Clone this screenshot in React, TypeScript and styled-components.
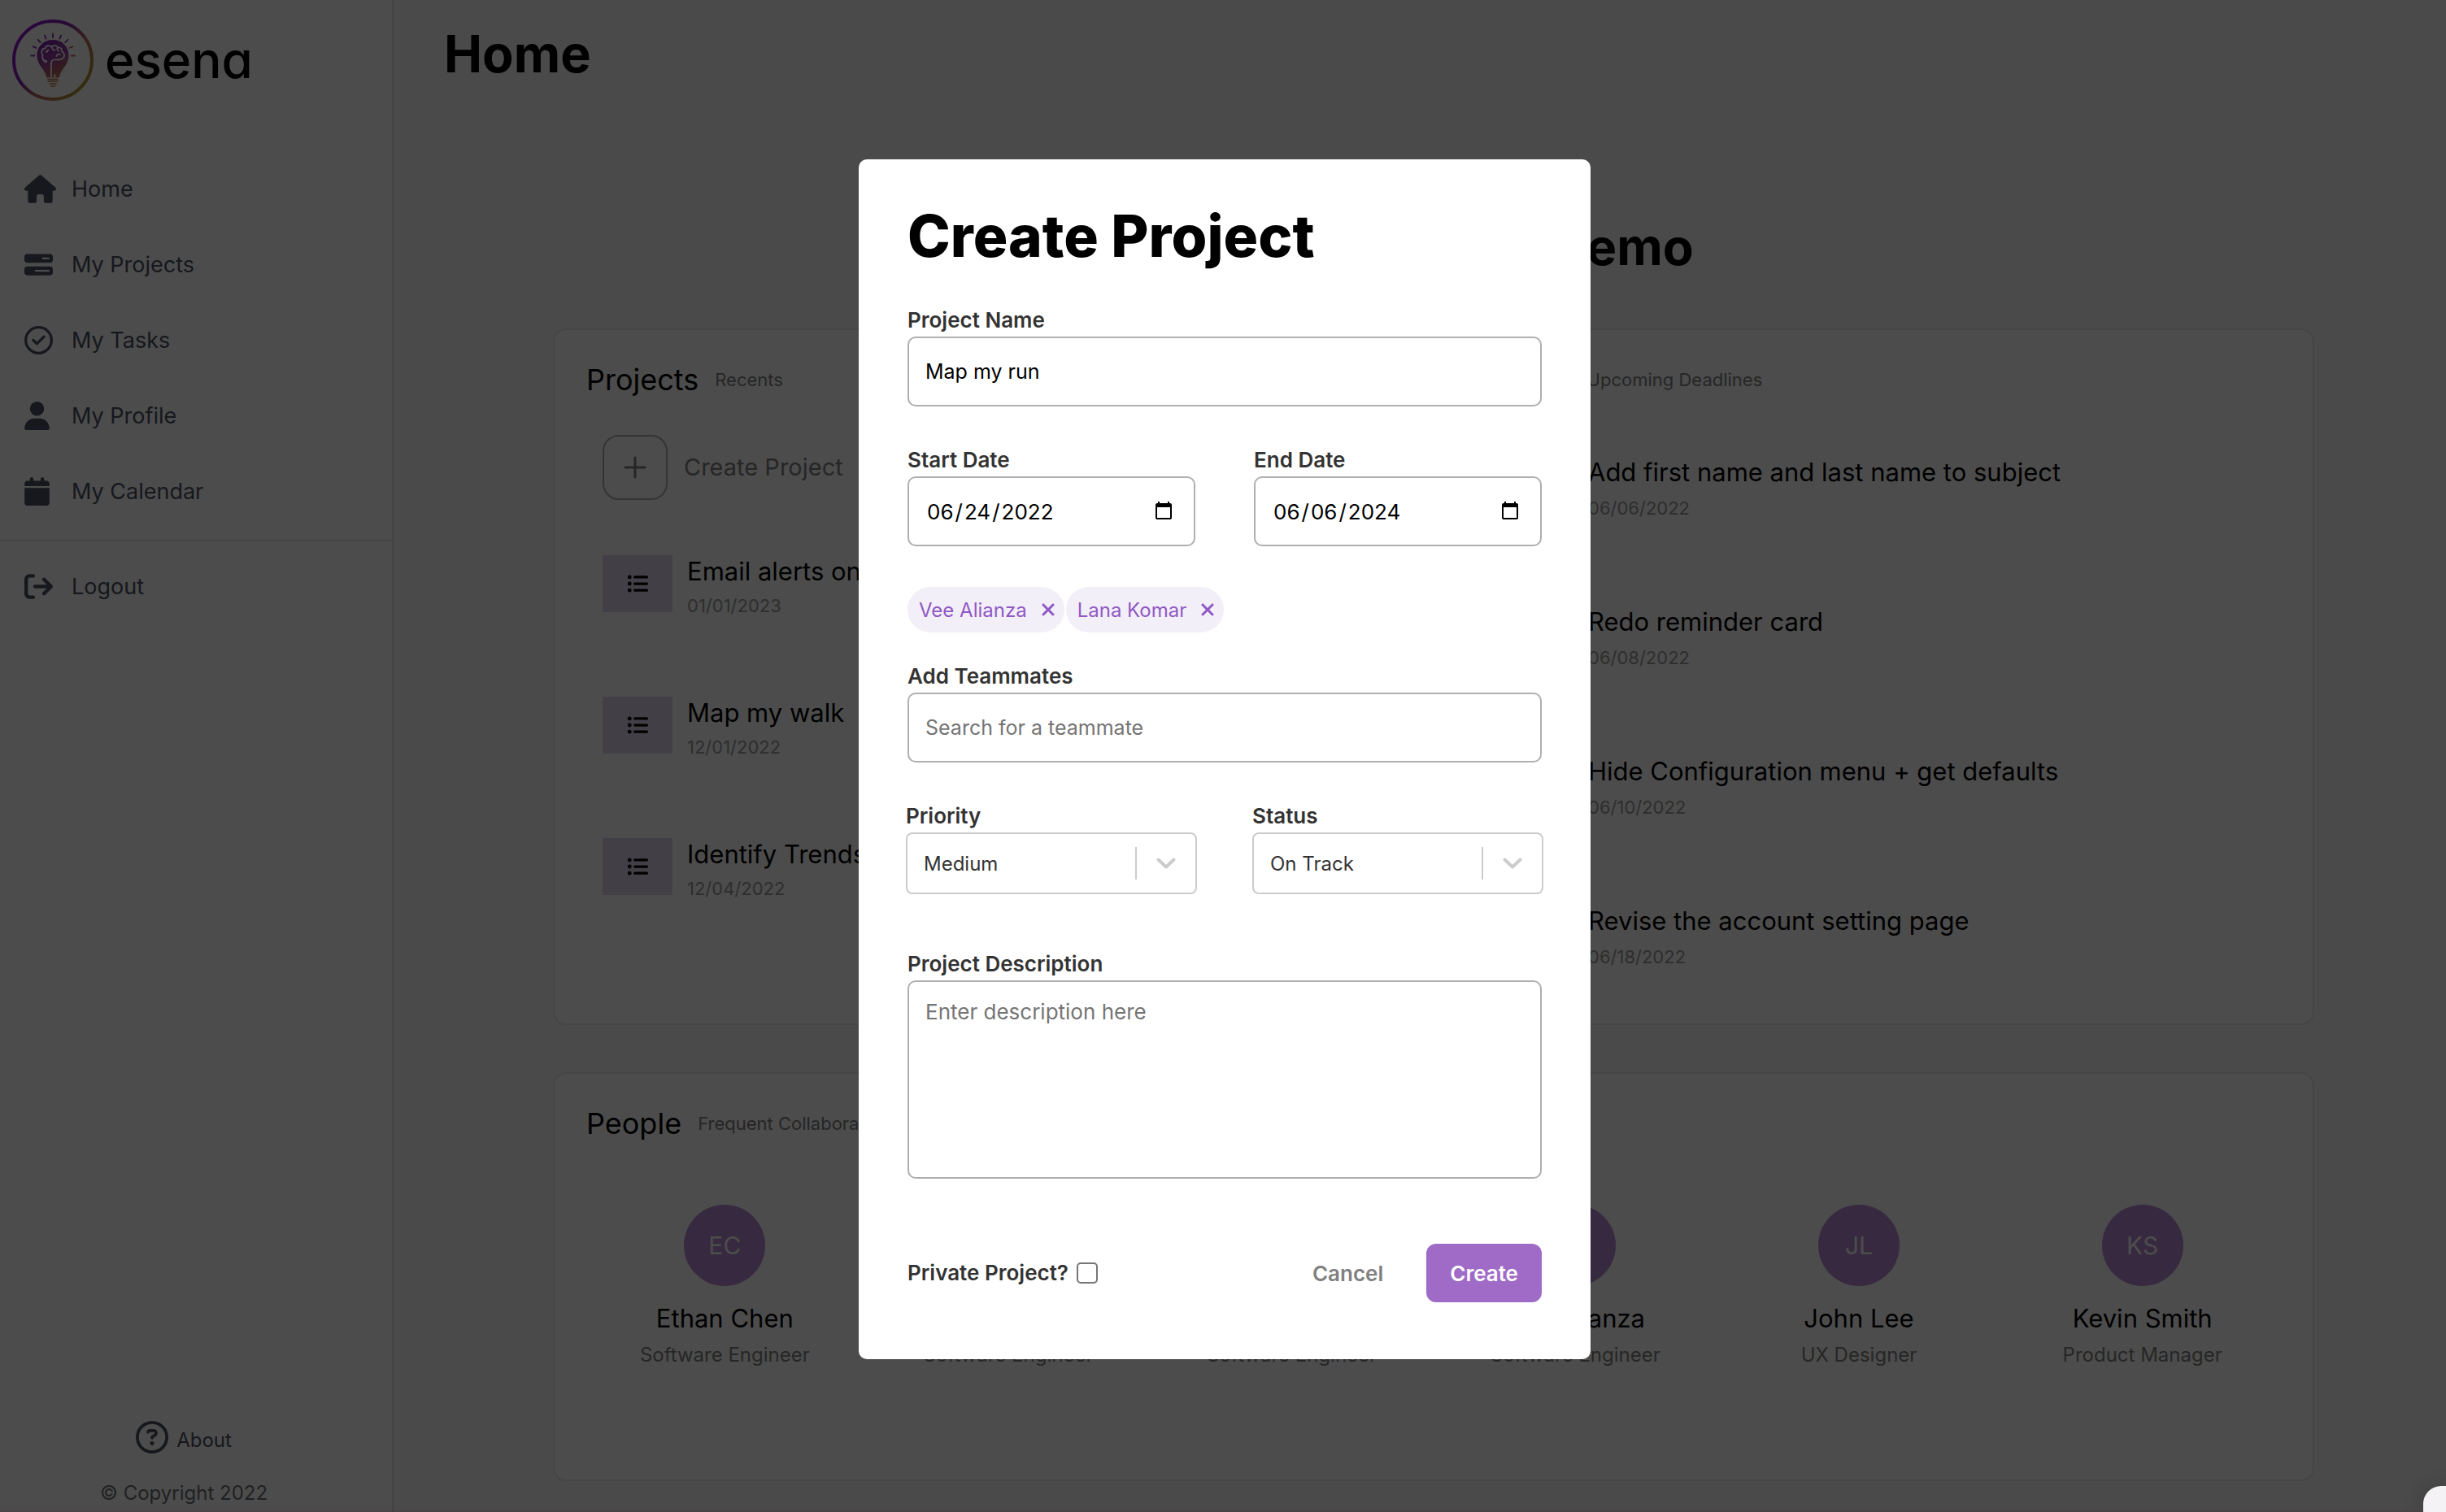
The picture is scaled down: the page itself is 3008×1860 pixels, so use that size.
import React, { useState } from "react";
import styled, { createGlobalStyle } from "styled-components";
import {
  FaHouse,
  FaBarsProgress,
  FaRegCircleCheck,
  FaUser,
  FaCalendar,
  FaArrowRightFromBracket,
  FaRegCircleQuestion,
  FaListUl,
  FaXmark,
} from "react-icons/fa6";

const GlobalStyle = createGlobalStyle`
  *, *::before, *::after { box-sizing: border-box; }
  body {
    margin: 0;
    background: #f9f8f8;
    color: #000;
    font-family: Inter, "Liberation Sans", sans-serif;
  }
  h1, h2, h3, p, ul { margin: 0; padding: 0; }
  ul { list-style: none; }
  button, input, select, textarea { font-family: inherit; }
`;

/* ---------- page shell ---------- */

const Layout = styled.div`
  display: flex;
  min-height: 100vh;
`;

const Sidebar = styled.aside`
  display: flex;
  flex-direction: column;
  flex: 0 0 484px;
  background: #fff;
  border-right: 2px solid #e4e1e1;
`;

const Brand = styled.a`
  display: flex;
  align-items: center;
  gap: 14px;
  padding: 24px 15px 62px;
  color: #000;
  text-decoration: none;

  svg { width: 100px; height: 100px; }
`;

const BrandName = styled.span`
  font-size: 62px;
  line-height: 80px;
  font-weight: 500;
  font-feature-settings: "cv11";
`;

const NavLink = styled.a`
  display: flex;
  align-items: center;
  height: 93px;
  padding: 0 30px;
  color: #4c5062;
  font-size: 27px;
  line-height: 36px;
  text-decoration: none;
`;

const NavIcon = styled.span<{ $width: number }>`
  display: flex;
  flex: 0 0 58px;

  svg { width: ${(p) => p.$width}px; height: 35px; }
`;

const Divider = styled.hr`
  width: 100%;
  height: 2px;
  margin: 13px 0 9px;
  border: 0;
  background: #e9e6e6;
`;

const SidebarFooter = styled.footer`
  display: flex;
  flex-direction: column;
  align-items: center;
  gap: 33px;
  margin-top: auto;
  padding: 0 30px 9px 0;
  color: #6d6e6f;
  font-size: 24px;
  line-height: 32px;
`;

const AboutLink = styled.a`
  display: flex;
  align-items: flex-end;
  gap: 10px;
  color: #4c5062;
  text-decoration: none;

  svg { width: 40px; height: 40px; }
`;

const Main = styled.main`
  flex: 1;
  min-width: 0;
  padding: 30px 162px 40px 196px;
`;

const PageTitle = styled.h1`
  margin-left: -134px;
  font-size: 63px;
  line-height: 72px;
  font-weight: 700;
`;

const Greeting = styled.h2`
  margin: 166px 0 64px;
  font-size: 62px;
  line-height: 72px;
  font-weight: 700;
  text-align: center;
`;

const Board = styled.div`
  display: grid;
  grid-template-columns: 1fr 1fr;
  gap: 58px;
`;

const Card = styled.section<{ $wide?: boolean; $bottom: number }>`
  grid-column: ${(p) => (p.$wide ? "1 / -1" : "auto")};
  padding: 37px 39px ${(p) => p.$bottom}px;
  background: #fff;
  border: 2px solid #e9e6e6;
  border-radius: 16px;
`;

const CardHead = styled.header`
  display: flex;
  align-items: center;
  gap: 20px;
`;

const CardTitle = styled.h3`
  font-size: 36px;
  line-height: 48px;
  font-weight: 400;
`;

const CardNote = styled.span`
  color: #808080;
  font-size: 22px;
  line-height: 28px;
`;

/* ---------- projects and tasks ---------- */

const CreateButton = styled.button`
  display: flex;
  align-items: center;
  gap: 20px;
  margin: 44px 0 68px 20px;
  padding: 0;
  border: 0;
  background: none;
  color: #808080;
  font-size: 29px;
  line-height: 36px;
`;

const PlusBox = styled.span`
  display: grid;
  place-items: center;
  width: 80px;
  height: 80px;
  border: 2px solid #b0b0b0;
  border-radius: 20px;

  svg { width: 28px; height: 28px; }
`;

const ProjectList = styled.ul`
  display: grid;
  gap: 98px;
  padding-left: 20px;
`;

const TaskList = styled.ul`
  display: grid;
  gap: 106px;
  padding: 70px 0 0 20px;
`;

const Item = styled.li<{ $gap: number }>`
  display: flex;
  align-items: flex-start;
  gap: ${(p) => p.$gap}px;
`;

const ProjectTile = styled.span`
  display: grid;
  place-items: center;
  width: 86px;
  height: 70px;
  background: #dcd2e9;
  font-size: 26px;
`;

const TaskMark = styled.span`
  display: grid;
  place-items: center;
  width: 60px;
  height: 40px;
  color: #6d6e6f;
  font-size: 30px;
`;

const ItemBody = styled.div<{ $gap: number }>`
  display: grid;
  gap: ${(p) => p.$gap}px;
`;

const ItemTitle = styled.span`
  font-size: 31px;
  line-height: 40px;
  white-space: nowrap;
`;

const ItemDate = styled.span`
  color: #999;
  font-size: 22px;
  line-height: 28px;
`;

/* ---------- people ---------- */

const PeopleGrid = styled.ul`
  display: grid;
  grid-template-columns: repeat(6, 1fr);
  && { margin: 76px -4px 0; }
`;

const Person = styled.li`
  display: flex;
  flex-direction: column;
  align-items: center;
`;

const Avatar = styled.span`
  display: grid;
  place-items: center;
  width: 100px;
  height: 100px;
  margin-bottom: 20px;
  border-radius: 50%;
  background: #ba89d3;
  color: #fff;
  font-size: 30px;
`;

const PersonName = styled.span`
  margin-bottom: 9px;
  font-size: 31px;
  line-height: 40px;
`;

const PersonRole = styled.span`
  color: #808080;
  font-size: 24px;
  line-height: 32px;
`;

/* ---------- dialog ---------- */

const Overlay = styled.div`
  position: fixed;
  inset: 0;
  display: flex;
  justify-content: center;
  align-items: flex-start;
  padding: 196px 0 0 4px;
  border-bottom: 2px solid rgba(70, 30, 40, 0.15);
  background: rgba(0, 0, 0, 0.7);
`;

const Dialog = styled.form`
  width: 900px;
  padding: 52px 60px 70px;
  border-radius: 10px;
  background: #fff;
  color: #333;
`;

const DialogTitle = styled.h2`
  margin-bottom: 46px;
  color: #000;
  font-size: 71px;
  line-height: 84px;
  font-weight: 800;
`;

const Row = styled.div<{ $gap: number; $bleed?: boolean }>`
  display: grid;
  grid-template-columns: 1fr 1fr;
  gap: ${(p) => p.$gap}px;
  margin: 0 ${(p) => (p.$bleed ? "-2px" : "0")};
`;

const Field = styled.div<{ $after: number }>`
  display: grid;
  gap: 4px;
  min-width: 0;
  margin-bottom: ${(p) => p.$after}px;
`;

const Label = styled.label`
  font-size: 26px;
  line-height: 32px;
  font-weight: 600;
`;

const TextInput = styled.input`
  width: 100%;
  height: 86px;
  padding: 0 20px;
  border: 2px solid #afafaf;
  border-radius: 10px;
  background: #fff;
  color: #000;
  font-size: 25px;

  &::placeholder { color: #757575; }
`;

const DateInput = styled(TextInput)`
  padding: 0 22px 0 20px;
  font-size: 26px;

  &::-webkit-datetime-edit-fields-wrapper { padding: 0; }
  &::-webkit-datetime-edit-month-field,
  &::-webkit-datetime-edit-day-field,
  &::-webkit-datetime-edit-year-field { padding: 0 2px; }
  &::-webkit-calendar-picker-indicator { width: 26px; height: 26px; padding: 2px; }
`;

const TextArea = styled.textarea`
  width: 100%;
  height: 244px;
  padding: 21px 20px;
  border: 2px solid #afafaf;
  border-radius: 10px;
  font-size: 26px;
  line-height: 32px;
  resize: none;

  &::placeholder { color: #757575; }
`;

const Tags = styled.ul`
  display: flex;
  gap: 2px;
  && { margin-bottom: 38px; }
`;

const Tag = styled.li`
  display: flex;
  align-items: center;
  gap: 14px;
  height: 56px;
  padding: 0 8px 0 14px;
  border-radius: 28px;
  background: #f3eff9;
  color: #9059c4;
  font-size: 24px;
`;

const TagRemove = styled.button`
  display: flex;
  padding: 0;
  border: 0;
  background: none;
  color: inherit;
  font-size: 24px;
`;

const SelectBox = styled.div`
  display: grid;
  grid-template-columns: 1fr 74px;
  align-items: center;
  height: 76px;
  border: 2px solid #ccc;
  border-radius: 8px;
`;

const Select = styled.select`
  grid-area: 1 / 1 / 2 / 3;
  height: 72px;
  padding: 0 20px;
  border: 0;
  background: none;
  color: #333;
  font-size: 24px;
  appearance: none;
`;

const SelectArrow = styled.span`
  grid-area: 1 / 2;
  display: grid;
  place-items: center;
  height: 40px;
  border-left: 2px solid #ccc;
  pointer-events: none;

  svg { width: 24px; height: 14px; }
`;

const DialogFooter = styled.div`
  display: flex;
  align-items: center;
  justify-content: space-between;
  gap: 24px;
`;

const PrivateOption = styled.div`
  display: flex;
  align-items: center;
  gap: 10px;
`;

const Checkbox = styled.input`
  width: 26px;
  height: 26px;
  margin: 0;
  border: 2px solid #767676;
  border-radius: 5px;
  background: #fff;
  appearance: none;

  &:checked { background: #9f6bc7; }
`;

const Actions = styled.div`
  display: flex;
  gap: 24px;
`;

const ActionButton = styled.button<{ $primary?: boolean }>`
  height: 72px;
  padding: 0 29px;
  border: 0;
  border-radius: 12px;
  background: ${(p) => (p.$primary ? "#9f6bc7" : "transparent")};
  color: ${(p) => (p.$primary ? "#fff" : "#808080")};
  font-size: 26px;
  font-weight: 600;
`;

const CornerPanel = styled.div`
  position: fixed;
  right: 0;
  bottom: 0;
  width: 28px;
  height: 32px;
  border-top-left-radius: 22px;
  background: #f4f2f4;
  box-shadow: 0 0 24px rgba(0, 0, 0, 0.2);
`;

/* ---------- drawings ---------- */

const rays = [-90, -65, -43, -22, 0, 22, 43, 65, 90];

const BrandMark = () => (
  <svg viewBox="0 0 100 100" fill="none" aria-hidden="true">
    <defs>
      <linearGradient id="ring" x1="10" y1="20" x2="90" y2="85" gradientUnits="userSpaceOnUse">
        <stop offset="0" stopColor="#8a18d0" />
        <stop offset="0.35" stopColor="#8220b0" />
        <stop offset="0.62" stopColor="#b86a60" />
        <stop offset="1" stopColor="#b29528" />
      </linearGradient>
      <linearGradient id="bulb" x1="34" y1="25" x2="64" y2="82" gradientUnits="userSpaceOnUse">
        <stop offset="0" stopColor="#7a1cb4" />
        <stop offset="0.45" stopColor="#96409a" />
        <stop offset="0.75" stopColor="#b86a50" />
        <stop offset="1" stopColor="#c08a40" />
      </linearGradient>
    </defs>
    <circle cx="50" cy="50" r="48" stroke="url(#ring)" strokeWidth="4" />
    {rays.map((a) => (
      <path
        key={a}
        d="M50 17.5V22"
        stroke={a > 50 ? "#b86a60" : "#8a2ab0"}
        strokeWidth="1.8"
        strokeLinecap="round"
        transform={`rotate(${a} 50 44.500)`}
      />
    ))}
    <path
      d="M50 25C39 25 30.500 33 30.500 44C30.500 53 36 58 39.500 64C41 67 41.500 69 42.500 71.500H57.500C58.500 69 59 67 60.500 64C64 58 69.500 53 69.500 44C69.500 33 61 25 50 25Z"
      fill="url(#bulb)"
    />
    <path d="M44 73.500H56M44 76H56M46 79H54M47.500 82H52.500" stroke="url(#bulb)" strokeWidth="1.6" strokeLinecap="round" />
    <path
      d="M42.500 51.500C38 51 36 46 37.500 43C34.500 40 37 35.500 40.500 35.500C41.500 31.500 46 31.500 48 33.500C51 31 55.500 32 56 34.500C60 34 62 37 61 39.500C65 41 65 47 61.500 48C58.500 51 54 48.500 51 49.500C49 50 48 51.500 48 54V71M37.500 43C36 47 38.500 52 41.500 52.500M41 39.500C43 40 44.500 38.500 44 37M49 34C49 37 51 38 52.500 37.500M57 39C55.500 38 55 36.500 55.500 35M59 43C57 42 55 43 54.500 45M52.500 71V68"
      stroke="#fff"
      strokeWidth="1.8"
      strokeLinecap="round"
      strokeLinejoin="round"
    />
  </svg>
);

const PlusMark = () => (
  <svg viewBox="0 0 28 28" fill="none" stroke="currentColor" strokeWidth="3" strokeLinecap="round" aria-hidden="true">
    <path d="M14 2V26M2 14H26" />
  </svg>
);

const Chevron = () => (
  <svg viewBox="0 0 24 14" fill="none" stroke="#ccc" strokeWidth="4" strokeLinecap="round" strokeLinejoin="round" aria-hidden="true">
    <path d="M2.500 2.500L12 11.500L21.500 2.500" />
  </svg>
);

/* ---------- data ---------- */

const navItems = [
  { label: "Home", Icon: FaHouse, width: 39 },
  { label: "My Projects", Icon: FaBarsProgress, width: 35 },
  { label: "My Tasks", Icon: FaRegCircleCheck, width: 35 },
  { label: "My Profile", Icon: FaUser, width: 31 },
  { label: "My Calendar", Icon: FaCalendar, width: 31 },
];

const projects = [
  { name: "Email alerts on update", date: "01/01/2023" },
  { name: "Map my walk", date: "12/01/2022" },
  { name: "Identify Trends", date: "12/04/2022" },
];

const tasks = [
  { name: "Add first name and last name to subject", date: "06/06/2022" },
  { name: "Redo reminder card", date: "06/08/2022" },
  { name: "Hide Configuration menu + get defaults", date: "06/10/2022" },
  { name: "Revise the account setting page", date: "06/18/2022" },
];

const people = [
  { initials: "EC", name: "Ethan Chen", role: "Software Engineer" },
  { initials: "LK", name: "Lana Komar", role: "Software Engineer" },
  { initials: "DU", name: "Demo User", role: "Software Engineer" },
  { initials: "VA", name: "Vee Alianza", role: "Software Engineer" },
  { initials: "JL", name: "John Lee", role: "UX Designer" },
  { initials: "KS", name: "Kevin Smith", role: "Product Manager" },
];

const SelectField = ({ id, label, options }: { id: string; label: string; options: string[] }) => (
  <Field $after={70}>
    <Label htmlFor={id}>{label}</Label>
    <SelectBox>
      <Select id={id} defaultValue={options[0]}>
        {options.map((o) => (
          <option key={o}>{o}</option>
        ))}
      </Select>
      <SelectArrow>
        <Chevron />
      </SelectArrow>
    </SelectBox>
  </Field>
);

const CreateProjectDialog = () => {
  const [team, setTeam] = useState(["Vee Alianza", "Lana Komar"]);

  return (
    <Overlay>
      <Dialog role="dialog" aria-labelledby="dialog-title" onSubmit={(e) => e.preventDefault()}>
        <DialogTitle id="dialog-title">Create Project</DialogTitle>
        <Field $after={50}>
          <Label htmlFor="name">Project Name</Label>
          <TextInput id="name" type="text" defaultValue="Map my run" />
        </Field>
        <Row $gap={72}>
          <Field $after={50}>
            <Label htmlFor="start">Start Date</Label>
            <DateInput id="start" type="date" defaultValue="2022-06-24" />
          </Field>
          <Field $after={50}>
            <Label htmlFor="end">End Date</Label>
            <DateInput id="end" type="date" defaultValue="2024-06-06" />
          </Field>
        </Row>
        <Tags>
          {team.map((name) => (
            <Tag key={name}>
              {name}
              <TagRemove
                type="button"
                aria-label={`Remove ${name}`}
                onClick={() => setTeam(team.filter((n) => n !== name))}
              >
                <FaXmark />
              </TagRemove>
            </Tag>
          ))}
        </Tags>
        <Field $after={50}>
          <Label htmlFor="team">Add Teammates</Label>
          <TextInput id="team" type="text" placeholder="Search for a teammate" />
        </Field>
        <Row $gap={68} $bleed>
          <SelectField id="priority" label="Priority" options={["Medium", "Low", "High"]} />
          <SelectField id="status" label="Status" options={["On Track", "At Risk", "Off Track"]} />
        </Row>
        <Field $after={80}>
          <Label htmlFor="description">Project Description</Label>
          <TextArea id="description" placeholder="Enter description here" />
        </Field>
        <DialogFooter>
          <PrivateOption>
            <Label htmlFor="private">Private Project?</Label>
            <Checkbox id="private" type="checkbox" />
          </PrivateOption>
          <Actions>
            <ActionButton type="button">Cancel</ActionButton>
            <ActionButton type="submit" $primary>
              Create
            </ActionButton>
          </Actions>
        </DialogFooter>
      </Dialog>
    </Overlay>
  );
};

export default function App() {
  return (
    <>
      <GlobalStyle />
      <Layout>
        <Sidebar>
          <Brand href="#home">
            <BrandMark />
            <BrandName>esena</BrandName>
          </Brand>
          <nav>
            {navItems.map(({ label, Icon, width }) => (
              <NavLink key={label} href="#">
                <NavIcon $width={width}>
                  <Icon />
                </NavIcon>
                {label}
              </NavLink>
            ))}
            <Divider />
            <NavLink href="#">
              <NavIcon $width={35}>
                <FaArrowRightFromBracket />
              </NavIcon>
              Logout
            </NavLink>
          </nav>
          <SidebarFooter>
            <AboutLink href="#">
              <FaRegCircleQuestion />
              About
            </AboutLink>
            <span>© Copyright 2022</span>
          </SidebarFooter>
        </Sidebar>
        <Main>
          <PageTitle>Home</PageTitle>
          <Greeting>Good morning, Demo</Greeting>
          <Board>
            <Card $bottom={152}>
              <CardHead>
                <CardTitle>Projects</CardTitle>
                <CardNote>Recents</CardNote>
              </CardHead>
              <CreateButton type="button">
                <PlusBox>
                  <PlusMark />
                </PlusBox>
                Create Project
              </CreateButton>
              <ProjectList>
                {projects.map((p) => (
                  <Item key={p.name} $gap={18}>
                    <ProjectTile>
                      <FaListUl />
                    </ProjectTile>
                    <ItemBody $gap={8}>
                      <ItemTitle>{p.name}</ItemTitle>
                      <ItemDate>{p.date}</ItemDate>
                    </ItemBody>
                  </Item>
                ))}
              </ProjectList>
            </Card>
            <Card $bottom={60}>
              <CardHead>
                <CardTitle>Tasks</CardTitle>
                <CardNote>Upcoming Deadlines</CardNote>
              </CardHead>
              <TaskList>
                {tasks.map((t) => (
                  <Item key={t.name} $gap={40}>
                    <TaskMark>
                      <FaRegCircleCheck />
                    </TaskMark>
                    <ItemBody $gap={10}>
                      <ItemTitle>{t.name}</ItemTitle>
                      <ItemDate>{t.date}</ItemDate>
                    </ItemBody>
                  </Item>
                ))}
              </TaskList>
            </Card>
            <Card $wide $bottom={137}>
              <CardHead>
                <CardTitle>People</CardTitle>
                <CardNote>Frequent Collaborators</CardNote>
              </CardHead>
              <PeopleGrid>
                {people.map((p) => (
                  <Person key={p.name}>
                    <Avatar>{p.initials}</Avatar>
                    <PersonName>{p.name}</PersonName>
                    <PersonRole>{p.role}</PersonRole>
                  </Person>
                ))}
              </PeopleGrid>
            </Card>
          </Board>
        </Main>
      </Layout>
      <CreateProjectDialog />
      <CornerPanel />
    </>
  );
}
